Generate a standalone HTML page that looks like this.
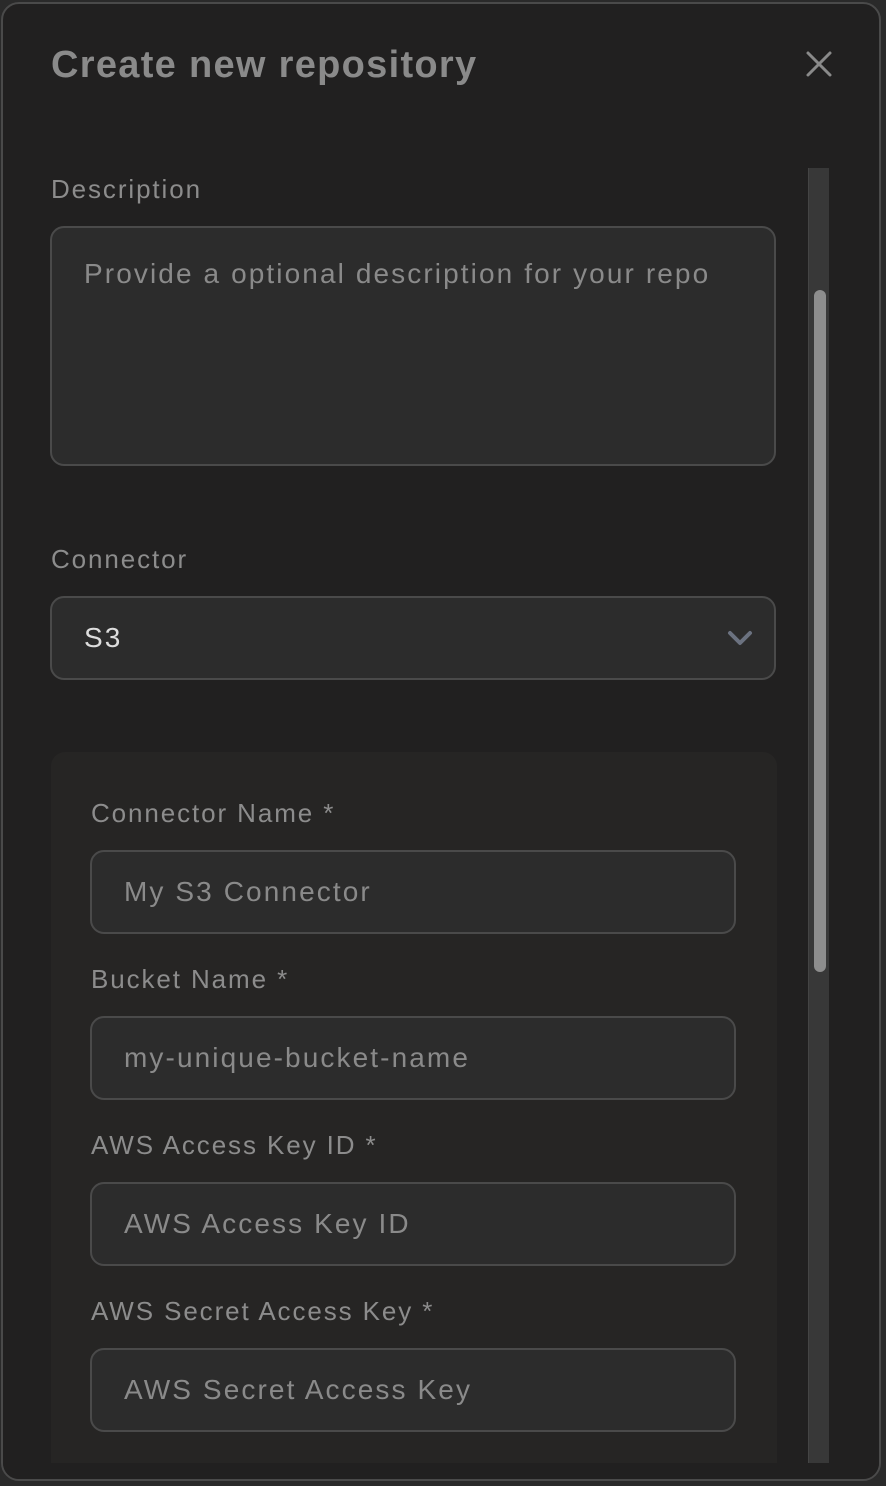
<!DOCTYPE html>
<html><head><style>
*{margin:0;padding:0;box-sizing:border-box}
body{width:886px;height:1486px;background:#2a2a2a;font-family:"Liberation Sans",sans-serif;overflow:hidden;position:relative}
.modal{position:absolute;left:1px;top:2px;width:880px;height:1479px;background:#212020;border:2px solid #4a4a4a;border-radius:18px;overflow:hidden}
.abs{position:absolute}
.title{left:48px;top:40px;font-size:38px;font-weight:bold;color:#8a8a8a;letter-spacing:1.3px}
.lbl{font-size:26px;color:#8c8c8c;letter-spacing:1.9px}
.box{background:#2c2c2c;border:2px solid #4a4a4a;border-radius:14px;color:#8a8a8a;font-size:28px;letter-spacing:2.1px}
</style></head><body>
<div class="modal">
<div class="abs title">Create new repository</div>
<svg class="abs" style="left:802px;top:46px" width="28" height="28" viewBox="0 0 28 28"><path d="M3 3L25 25M25 3L3 25" stroke="#8a8a8a" stroke-width="3" stroke-linecap="round"/></svg>
<div class="abs" style="left:805px;top:164px;width:21px;height:1300px;background:#383838;border-left:1px solid #444"></div>
<div class="abs" style="left:811px;top:286px;width:12px;height:682px;background:#8d8d8d;border-radius:6px"></div>
<div class="abs lbl" style="left:48px;top:170px">Description</div>
<div class="abs box" style="left:47px;top:222px;width:726px;height:240px;padding:30px 0 0 32px">Provide a optional description for your repo</div>
<div class="abs lbl" style="left:48px;top:540px">Connector</div>
<div class="abs box" style="left:47px;top:592px;width:726px;height:84px;padding:24px 0 0 32px;color:#ddd">S3</div>
<svg class="abs" style="left:724px;top:626px" width="26" height="16" viewBox="0 0 26 16"><path d="M3 3L13 13L23 3" stroke="#6b7280" stroke-width="4" fill="none" stroke-linecap="round" stroke-linejoin="round"/></svg>
<div class="abs" style="left:48px;top:748px;width:726px;height:760px;background:#262524;border-radius:14px"></div>
<div class="abs lbl" style="left:88px;top:794px">Connector Name *</div>
<div class="abs box" style="left:87px;top:846px;width:646px;height:84px;padding:24px 0 0 32px">My S3 Connector</div>
<div class="abs lbl" style="left:88px;top:960px">Bucket Name *</div>
<div class="abs box" style="left:87px;top:1012px;width:646px;height:84px;padding:24px 0 0 32px">my-unique-bucket-name</div>
<div class="abs lbl" style="left:88px;top:1126px">AWS Access Key ID *</div>
<div class="abs box" style="left:87px;top:1178px;width:646px;height:84px;padding:24px 0 0 32px">AWS Access Key ID</div>
<div class="abs lbl" style="left:88px;top:1292px">AWS Secret Access Key *</div>
<div class="abs box" style="left:87px;top:1344px;width:646px;height:84px;padding:24px 0 0 32px">AWS Secret Access Key</div>
<div class="abs" style="left:0;top:1459px;width:880px;height:20px;background:#212020"></div>
</div>
</body></html>
